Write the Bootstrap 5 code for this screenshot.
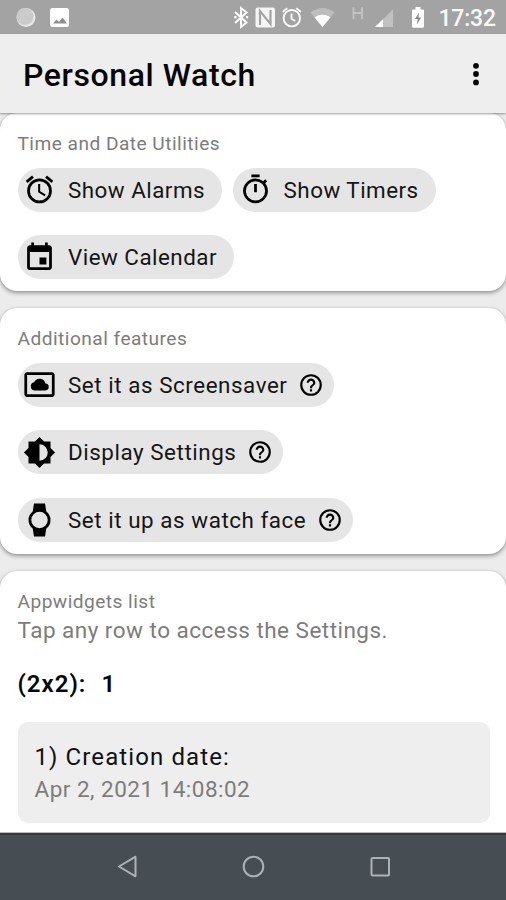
<!DOCTYPE html>
<html lang="en">
<head>
<meta charset="utf-8">
<meta name="viewport" content="width=device-width, initial-scale=1">
<title>Personal Watch</title>
<link href="https://cdn.jsdelivr.net/npm/bootstrap@5.3.0/dist/css/bootstrap.min.css" rel="stylesheet">
<style>
body{font-family:Roboto,"Liberation Sans",sans-serif;background:#ececec;color:#111;width:506px;height:900px;overflow:hidden}
svg{display:block;flex:none}
.status{height:34px;background:#a3a3a3;color:#fff}
.clock{font-size:23px;line-height:34px;font-weight:500;letter-spacing:-.2px}
.appbar{height:79px;background:#eee;z-index:2;box-shadow:0 1px 2px rgba(0,0,0,.38)}
.appbar h1{font-size:32px;line-height:40px;font-weight:500;letter-spacing:.6px;color:#060606;padding:2px 0 0 23px}
.panel{border:0;border-radius:17px;box-shadow:0 2px 4px rgba(0,0,0,.36),0 0 2px rgba(0,0,0,.14);padding:19px 16px 0 17.5px}
.p1{height:178px}
.p2{height:246px;margin-top:17px}
.p3{height:262px;margin-top:17px;border-radius:17px 17px 0 0}
.cap{font-size:19.1px;line-height:24px;letter-spacing:.48px;color:#7c7c7c}
.chip{height:44px;background:#e5e5e5;border-radius:22px;padding:0 17px 0 5.5px;font-size:22.4px;line-height:44px;letter-spacing:.48px;color:#151515;width:max-content;border:0}
.p2 .chip{letter-spacing:.55px}
.chip .lead-ico{margin-right:12px}
.chip .help-ico{margin-left:11px;margin-right:-7px}
.chips{gap:23.5px 11px;margin-top:11.5px}
.sub{font-size:22.5px;line-height:32px;letter-spacing:.48px;color:#7c7c7c}
.size{font-size:24px;line-height:28px;font-weight:600;letter-spacing:1px;word-spacing:.6px;color:#060606;white-space:pre;margin:24px 0 24px}
.entry{height:101px;background:#eee;border-radius:10px;padding:19px 17px 0}
.entry .ttl{font-size:24px;line-height:32px;letter-spacing:1.1px;color:#111}
.navkeys{height:67px;background:#464e53;border-top:2px solid #343a3d;z-index:3;box-shadow:0 -1px 0 #b9bcbd}
</style>
</head>
<body class="d-flex flex-column">
<div class="status d-flex align-items-center flex-shrink-0">
<svg width="506" height="34" viewBox="0 0 506 34">
<circle cx="26" cy="17.500" r="9.500" fill="#e6e6e6"/><circle cx="25" cy="16.500" r="8.500" fill="#cbcbcb"/>
<rect x="50" y="8" width="19" height="19" rx="2.500" fill="#fff"/><path d="M53 23.500l3.500-4 2.500 2.500 3.500-4.500 4.500 6z" fill="#8f8f8f"/>
<path d="M235 12l11.500 10.500-5.500 4.500V8l5.500 4.500L235 23" fill="none" stroke="#fff" stroke-width="2"/><path d="M234.300 16h2.200v2.500h-2.200zM246 16h2.200v2.500H246z" fill="#fff"/>
<rect x="255.500" y="7.500" width="19.500" height="20" rx="2" fill="#f5f5f5"/><path d="M260 25V11l10.500 13V10" fill="none" stroke="#a3a3a3" stroke-width="2.200"/>
<g fill="none" stroke="#f7f7f7" stroke-width="1.900"><circle cx="291.800" cy="18.200" r="8.200"/><path d="M291.500 13.500v5.200l3.700 2.300M282.700 12l4.600-3.900M300.900 12l-4.600-3.900"/></g>
<path d="M310.500 12.500q12-9 24 0L322.500 27z" fill="#bdbdbd"/><path d="M314.500 17.200q8-4.800 16 0L322.500 27z" fill="#fff"/>
<path d="M393 27V9.500L375 27z" fill="#c2c2c2"/><path d="M383 27v-7.700L375 27z" fill="#fff"/>
<path d="M353.500 7.300v11.600M362 7.300v11.600M353.500 13h8.500" fill="none" stroke="#c4c4c4" stroke-width="1.800"/>
<path d="M415.500 7v2.500H413q-1 0-1 1V26.500q0 1.200 1.200 1.200h9.600q1.200 0 1.200-1.200V10.500q0-1-1-1h-2.500V7z" fill="#fff"/><path d="M419 12.500l-4 6.500h2.700l-.8 5.500 4.300-7h-2.800z" fill="#888"/>
<text class="clock" x="438.500" y="26" fill="#f8f8f8">17:32</text>
</svg>
</div>
<header class="appbar d-flex align-items-center justify-content-between flex-shrink-0 position-relative">
<h1 class="m-0">Personal Watch</h1>
<svg class="me-3" width="28" height="30" viewBox="0 0 28 30"><g fill="#060606"><circle cx="14" cy="6.800" r="2.900"/><circle cx="14" cy="15" r="2.900"/><circle cx="14" cy="23.400" r="2.900"/></g></svg>
</header>
<main class="flex-grow-1">
<section class="card panel p1">
<div class="cap">Time and Date Utilities</div>
<div class="chips d-flex flex-wrap">
<div class="chip d-flex align-items-center"><svg class="lead-ico" width="33" height="33" viewBox="0 0 24 24"><path d="M22 5.720l-4.600-3.860-1.290 1.530 4.600 3.860L22 5.720zM7.880 3.390L6.600 1.860 2 5.710l1.290 1.530 4.590-3.850zM12.500 8H11v6l4.750 2.850.75-1.230-4-2.370V8zM12 4a9 9 0 1 0 0 18 9 9 0 0 0 0-18zm0 16a7 7 0 1 1 0-14 7 7 0 0 1 0 14z"/></svg><span>Show Alarms</span></div>
<div class="chip d-flex align-items-center"><svg class="lead-ico" width="33" height="33" viewBox="0 0 24 24"><path d="M15 1H9v2h6V1zm-4 13h2V8h-2v6zm8.030-6.610l1.420-1.420c-.43-.51-.9-.99-1.410-1.410l-1.420 1.420A8.962 8.962 0 0 0 12 4a9 9 0 1 0 7.030 3.390zM12 20a7 7 0 1 1 0-14 7 7 0 0 1 0 14z"/></svg><span>Show Timers</span></div>
<div class="chip d-flex align-items-center"><svg class="lead-ico" width="33" height="33" viewBox="0 0 24 24"><path d="M17 12h-5v5h5v-5zM16 1v2H8V1H6v2H5c-1.110 0-1.990.9-1.990 2L3 19a2 2 0 0 0 2 2h14c1.100 0 2-.9 2-2V5c0-1.100-.9-2-2-2h-1V1h-2zm3 18H5V8h14v11z"/></svg><span>View Calendar</span></div>
</div>
</section>
<section class="card panel p2">
<div class="cap">Additional features</div>
<div class="chips d-flex flex-column">
<div class="chip d-flex align-items-center"><svg class="lead-ico" width="33" height="33" viewBox="0 0 24 24"><path d="M21 3H3c-1.100 0-2 .9-2 2v14c0 1.100.9 2 2 2h18c1.100 0 2-.9 2-2V5c0-1.100-.9-2-2-2zm0 16H3V5h18v14z"/><path d="M8.200 16.300h7.900a2.500 2.500 0 0 0 .2-5 4.300 4.300 0 0 0-8.200-.9 3 3 0 0 0 .1 5.900z"/></svg><span>Set it as Screensaver</span><svg class="help-ico" width="26" height="26" viewBox="0 0 24 24"><path d="M11 18h2v-2h-2v2zm1-16a10 10 0 1 0 0 20 10 10 0 0 0 0-20zm0 18a8 8 0 1 1 0-16 8 8 0 0 1 0 16zm0-14a4 4 0 0 0-4 4h2c0-1.100.9-2 2-2s2 .9 2 2c0 2-3 1.750-3 5h2c0-2.250 3-2.500 3-5a4 4 0 0 0-4-4z"/></svg></div>
<div class="chip d-flex align-items-center"><svg class="lead-ico" width="33" height="33" viewBox="0 0 24 24"><path d="M20 15.310L23.310 12 20 8.690V4h-4.690L12 .69 8.690 4H4v4.690L.69 12 4 15.310V20h4.690L12 23.310 15.310 20H20v-4.690zM12 18V6a6 6 0 0 1 0 12z"/></svg><span>Display Settings</span><svg class="help-ico" width="26" height="26" viewBox="0 0 24 24"><path d="M11 18h2v-2h-2v2zm1-16a10 10 0 1 0 0 20 10 10 0 0 0 0-20zm0 18a8 8 0 1 1 0-16 8 8 0 0 1 0 16zm0-14a4 4 0 0 0-4 4h2c0-1.100.9-2 2-2s2 .9 2 2c0 2-3 1.750-3 5h2c0-2.250 3-2.500 3-5a4 4 0 0 0-4-4z"/></svg></div>
<div class="chip d-flex align-items-center"><svg class="lead-ico" width="33" height="34" viewBox="0 0 24 24"><path d="M20 12a7.980 7.980 0 0 0-3.040-6.270L16 0H8l-.95 5.730A7.940 7.940 0 0 0 4 12c0 2.550 1.190 4.810 3.050 6.270L8 24h8l.96-5.730A7.980 7.980 0 0 0 20 12zM6 12a6 6 0 1 1 12 0 6 6 0 0 1-12 0z"/></svg><span>Set it up as watch face</span><svg class="help-ico" width="26" height="26" viewBox="0 0 24 24"><path d="M11 18h2v-2h-2v2zm1-16a10 10 0 1 0 0 20 10 10 0 0 0 0-20zm0 18a8 8 0 1 1 0-16 8 8 0 0 1 0 16zm0-14a4 4 0 0 0-4 4h2c0-1.100.9-2 2-2s2 .9 2 2c0 2-3 1.750-3 5h2c0-2.250 3-2.500 3-5a4 4 0 0 0-4-4z"/></svg></div>
</div>
</section>
<section class="card panel p3">
<div class="cap">Appwidgets list</div>
<div class="sub">Tap any row to access the Settings.</div>
<div class="size">(2x2):  1</div>
<div class="entry"><div class="ttl">1) Creation date:</div><div class="sub">Apr 2, 2021 14:08:02</div></div>
</section>
</main>
<nav class="navkeys flex-shrink-0 position-relative d-flex justify-content-center align-items-center">
<svg width="506" height="65" viewBox="0 836 506 65"><g fill="none" stroke="#adb2b4" stroke-width="2" stroke-linejoin="round"><path d="M119 867.500l16.500-9.800v19.600z"/><circle cx="253.500" cy="867.500" r="9.800"/><rect x="371.500" y="859" width="17.500" height="17.500" rx="1"/></g></svg>
</nav>
<script src="https://cdn.jsdelivr.net/npm/bootstrap@5.3.0/dist/js/bootstrap.bundle.min.js"></script>
</body>
</html>
